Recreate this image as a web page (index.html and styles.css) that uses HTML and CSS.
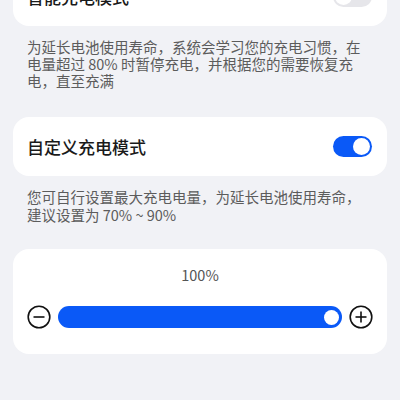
FILE: index.html
```html
<!DOCTYPE html>
<html lang="zh-CN">
<head>
    <meta charset="UTF-8">
    <meta name="viewport" content="width=device-width, initial-scale=1.0">
    <title>充电设置</title>
    <link rel="stylesheet" href="styles.css">
</head>
<body>
    <div class="page">
        <div class="card row-card first">
            <span class="row-title">智能充电模式</span>
            <span class="switch"><span class="knob"></span></span>
        </div>
        <p class="desc">为延长电池使用寿命，系统会学习您的充电习惯，在电量超过 80% 时暂停充电，并根据您的需要恢复充电，直至充满</p>

        <div class="card row-card">
            <span class="row-title">自定义充电模式</span>
            <span class="switch on"><span class="knob"></span></span>
        </div>
        <p class="desc desc-2">您可自行设置最大充电电量，为延长电池使用寿命，建议设置为 70% ~ 90%</p>

        <div class="card level-card">
            <div class="level-value">100%</div>
            <div class="slider-row">
                <svg class="step-btn" viewBox="0 0 24 24" width="24" height="24">
                    <circle cx="12" cy="12" r="10.8" fill="none" stroke="#111" stroke-width="1.6"/>
                    <line x1="6.5" y1="12" x2="17.5" y2="12" stroke="#111" stroke-width="1.6"/>
                </svg>
                <div class="track">
                    <span class="thumb"></span>
                </div>
                <svg class="step-btn" viewBox="0 0 24 24" width="24" height="24">
                    <circle cx="12" cy="12" r="10.8" fill="none" stroke="#111" stroke-width="1.6"/>
                    <line x1="6.5" y1="12" x2="17.5" y2="12" stroke="#111" stroke-width="1.6"/>
                    <line x1="12" y1="6.5" x2="12" y2="17.5" stroke="#111" stroke-width="1.6"/>
                </svg>
            </div>
        </div>
    </div>
</body>
</html>
```

FILE: styles.css
```css
body {
    margin: 0;
    background: #f1f2f6;
    font-family: "Noto Sans CJK SC", "Noto Sans", sans-serif;
    color: #1a1a1a;
    overflow: hidden;
}

.page {
    padding: 0 13px;
}

.card {
    background: #fff;
    border-radius: 16px;
}

.row-card {
    height: 59px;
    padding: 0 15px 0 14px;
    display: flex;
    align-items: center;
    justify-content: space-between;
}

.first {
    margin-top: -33px;
}

.row-title {
    font-size: 17px;
    font-weight: 500;
}

.switch {
    width: 39px;
    height: 21px;
    border-radius: 11px;
    background: #e6e6ea;
    display: flex;
    align-items: center;
    padding: 0 2px;
    box-sizing: border-box;
}

.switch .knob {
    width: 17px;
    height: 17px;
    border-radius: 50%;
    background: #fff;
}

.switch.on {
    background: #0a59f7;
    justify-content: flex-end;
}

.desc {
    margin: 0;
    padding: 12px 17px 28px 14px;
    font-size: 14.5px;
    line-height: 17px;
    color: #5c5c5c;
}

.desc-2 {
    line-height: 18px;
    padding-bottom: 25px;
}

.level-card {
    padding: 16px 14px 25px;
}

.level-value {
    text-align: center;
    font-size: 14.5px;
    line-height: 20px;
    color: #555;
    margin-bottom: 20px;
}

.slider-row {
    display: flex;
    align-items: center;
    gap: 7px;
}

.step-btn {
    flex: none;
}

.track {
    flex: 1;
    height: 22px;
    border-radius: 11px;
    background: #0a59f7;
    display: flex;
    align-items: center;
    justify-content: flex-end;
    padding-right: 3px;
}

.thumb {
    width: 15px;
    height: 15px;
    border-radius: 50%;
    background: #fff;
}
```
